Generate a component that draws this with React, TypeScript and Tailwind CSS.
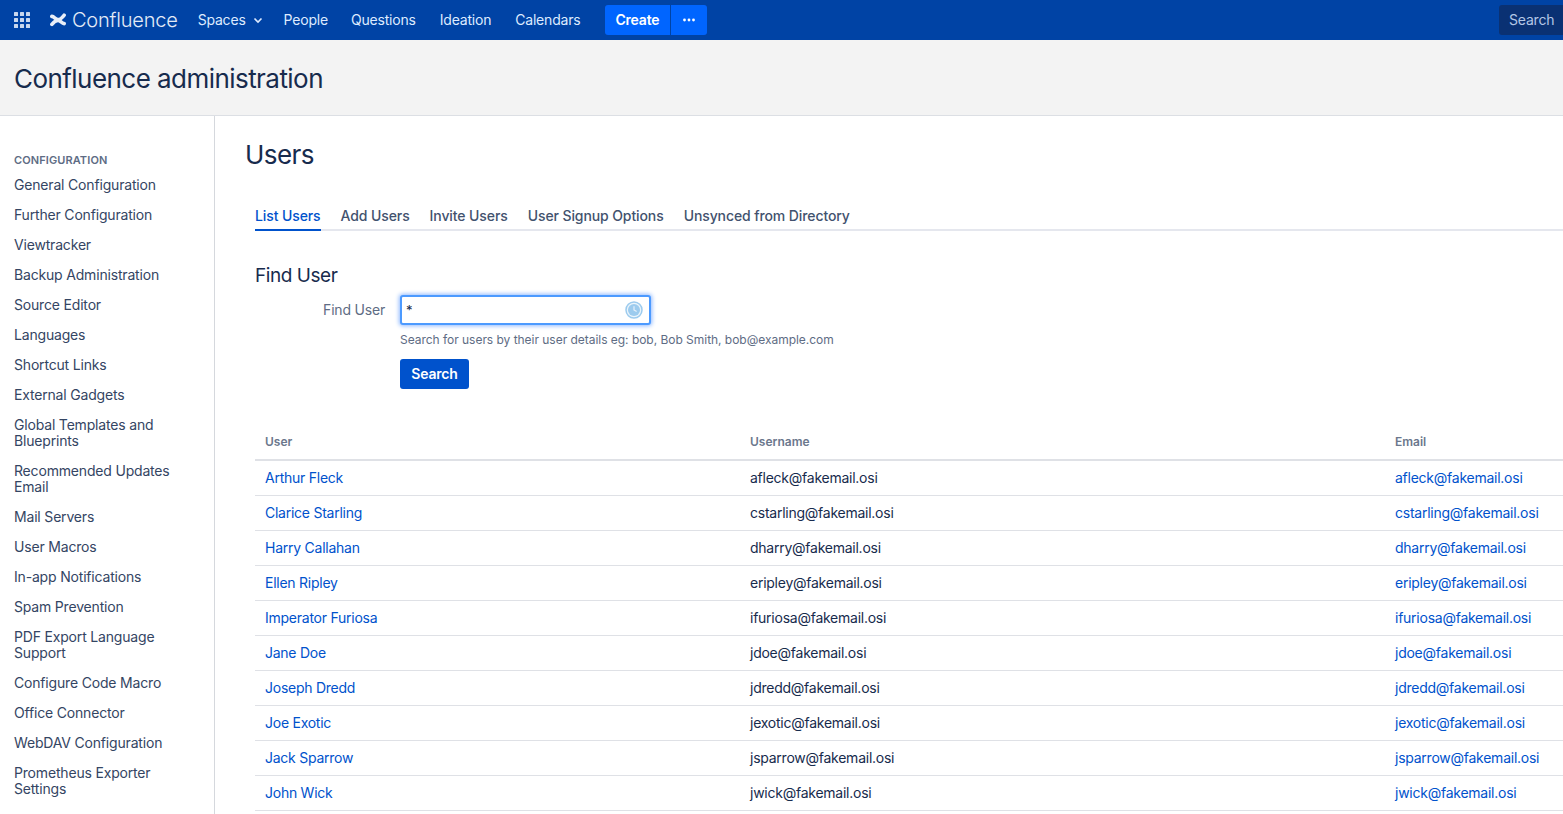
import React from "react";

const navItems = ["Ideation", "Calendars"];
const sidebar = [
  "General Configuration",
  "Further Configuration",
  "Viewtracker",
  "Backup Administration",
  "Source Editor",
  "Languages",
  "Shortcut Links",
  "External Gadgets",
  "Global Templates and Blueprints",
  "Recommended Updates Email",
  "Mail Servers",
  "User Macros",
  "In-app Notifications",
  "Spam Prevention",
  "PDF Export Language Support",
  "Configure Code Macro",
  "Office Connector",
  "WebDAV Configuration",
  "Prometheus Exporter Settings",
];
const users = [
  ["Arthur Fleck", "afleck"],
  ["Clarice Starling", "cstarling"],
  ["Harry Callahan", "dharry"],
  ["Ellen Ripley", "eripley"],
  ["Imperator Furiosa", "ifuriosa"],
  ["Jane Doe", "jdoe"],
  ["Joseph Dredd", "jdredd"],
  ["Joe Exotic", "jexotic"],
  ["Jack Sparrow", "jsparrow"],
  ["John Wick", "jwick"],
];
const tabs = ["Add Users", "Invite Users", "User Signup Options", "Unsynced from Directory"];

function Grid() {
  return (
    <svg width="18" height="18" viewBox="0 0 18 18" fill="#c9d8ee">
      {[1, 7, 13].map((y) =>
        [1, 7, 13].map((x) => <rect key={`${x}-${y}`} x={x} y={y} width="4" height="4" rx="0.5" />)
      )}
    </svg>
  );
}

function Logo() {
  return (
    <svg width="16" height="14" viewBox="0 0 16 14" fill="none" stroke="#e8eef8" strokeWidth="3.6" strokeLinecap="round">
      <path d="M1.9 11.4C3.8 9 5.6 7.4 8 7.4c2.4 0 3.6 3 6.2 3.2" />
      <path d="M14.1 2.2C12.2 4.8 10.4 6.6 8 6.6 5.6 6.6 4.4 3.7 1.8 3.4" />
    </svg>
  );
}

export default function App() {
  return (
    <div className="h-[814px] w-[1563px] overflow-hidden bg-white font-['Inter','Liberation_Sans',sans-serif] text-[14px] leading-[20px] tracking-[-0.2px] text-[#253858]">
      <header className="flex h-[40px] items-center bg-[#0043a5] text-[#deebff]">
        <div className="ml-[13px] flex w-[18px] items-center">
          <Grid />
        </div>
        <div className="ml-[19px] flex items-center">
          <Logo />
          <span className="ml-[6px] text-[20px] font-light leading-[24px] tracking-[-0.2px] text-[#e3ebf7]">Confluence</span>
        </div>
        <div className="ml-[20px] flex items-center">
          <span>Spaces</span>
          <svg className="ml-[7px]" width="10" height="10" viewBox="0 0 10 10" fill="none" stroke="#deebff" strokeWidth="1.6">
            <path d="M1.5 3.5 5 7l3.5-3.5" />
          </svg>
        </div>
        <span className="ml-[21px]">People</span>
        <span className="ml-[23px]">Questions</span>
        {navItems.map((n) => (
          <span key={n} className="ml-[24px]">
            {n}
          </span>
        ))}
        <div className="ml-[25px] flex h-[30px] items-stretch">
          <div className="flex w-[65px] items-center rounded-l-[3px] bg-[#0065ff] pl-[10px] font-semibold text-white">Create</div>
          <div className="ml-px flex w-[36px] items-center justify-center rounded-r-[3px] bg-[#0065ff]">
            <svg width="14" height="4" viewBox="0 0 14 4" fill="#fff">
              <circle cx="2.5" cy="2" r="1.4" />
              <circle cx="7" cy="2" r="1.4" />
              <circle cx="11.5" cy="2" r="1.4" />
            </svg>
          </div>
        </div>
        <div className="ml-auto flex h-[30px] w-[64px] items-center rounded-l-[3px] bg-[#0a3173] pl-[10px] text-[#b3c7e6]">Search</div>
      </header>

      <div className="flex h-[76px] items-start border-b border-[#dcdfe4] bg-[#f3f3f3] pl-[14px] pt-[23px]">
        <h1 className="text-[26px] font-normal leading-[32px] tracking-[-0.55px] text-[#172b4d]">Confluence administration</h1>
      </div>

      <div className="flex">
        <aside className="h-[699px] w-[215px] shrink-0 border-r border-[#d5d8dd] pl-[14px] pr-[30px] pt-[37px]">
          <div className="mb-[3px] text-[11px] font-semibold leading-[14px] tracking-[0.1px] text-[#5e6c84]">CONFIGURATION</div>
          {sidebar.map((s) => (
            <div key={s} className="py-[7px] leading-[16px] tracking-[-0.18px] text-[#344563]">
              {s}
            </div>
          ))}
        </aside>

        <main className="min-w-0 flex-1 pl-[30px]">
          <h2 className="pt-[23px] text-[26px] font-normal leading-[32px] tracking-[-0.55px] text-[#172b4d]">Users</h2>

          <nav className="ml-[10px] mt-[35px] flex h-[25px] gap-[20px] border-b-2 border-[#e5e7ee] font-medium tracking-[-0.1px] text-[#42526e]">
            <span className="-mb-[2px] h-[25px] border-b-2 border-[#0052cc] text-[#0052cc]">List Users</span>
            {tabs.map((t) => (
              <span key={t}>{t}</span>
            ))}
          </nav>

          <div className="ml-[10px]">
            <h3 className="mt-[33px] text-[19px] font-normal leading-[24px] tracking-[-0.45px] text-[#172b4d]">Find User</h3>
            <div className="mt-[7px] flex">
              <label className="w-[130px] pt-[5px] text-right text-[#5e6c84]">Find User</label>
              <div className="ml-[15px]">
                <div className="flex h-[30px] w-[251px] items-center rounded-[3px] border-2 border-[#4c9aff] bg-white pl-[4px] pr-[6px] shadow-[0_0_4px_1px_#8fb9ff]">
                  <span className="text-[13px] text-[#172b4d]">*</span>
                  <svg className="ml-auto" width="18" height="18" viewBox="0 0 18 18">
                    <circle cx="9" cy="9" r="8" fill="#eaf4fb" stroke="#9ccbee" strokeWidth="1.5" />
                    <circle cx="9" cy="9" r="6" fill="#9ccbee" />
                    <path d="M9 5.2V9l2.6 1.5" fill="none" stroke="#e6f1fa" strokeWidth="1.2" />
                  </svg>
                </div>
                <div className="mt-[5px] text-[12px] leading-[20px] tracking-[-0.03px] text-[#5e6c84]">
                  Search for users by their user details eg: bob, Bob Smith, bob@example.com
                </div>
                <button className="mt-[9px] flex h-[30px] w-[69px] items-center justify-center rounded-[3px] bg-[#0052cc] font-semibold text-white">
                  Search
                </button>
              </div>
            </div>
          </div>

          <table className="ml-[10px] mt-[36px] w-[1400px] table-fixed border-collapse text-left tracking-[-0.25px]">
            <colgroup>
              <col className="w-[485px]" />
              <col className="w-[645px]" />
              <col />
            </colgroup>
            <thead>
              <tr className="h-[35px] border-b-2 border-[#dfe1e6] text-[12px] font-semibold tracking-[0px] text-[#6b778c]">
                <th className="pl-[10px] font-semibold">User</th>
                <th className="pl-[10px] font-semibold">Username</th>
                <th className="pl-[10px] font-semibold">Email</th>
              </tr>
            </thead>
            <tbody>
              {users.map(([name, u]) => (
                <tr key={u} className="h-[35px] border-b border-[#dfe1e6]">
                  <td className="pl-[10px] text-[#0052cc]">{name}</td>
                  <td className="pl-[10px] text-[#172b4d]">{u}@fakemail.osi</td>
                  <td className="pl-[10px] text-[#0052cc]">{u}@fakemail.osi</td>
                </tr>
              ))}
            </tbody>
          </table>
        </main>
      </div>
    </div>
  );
}
